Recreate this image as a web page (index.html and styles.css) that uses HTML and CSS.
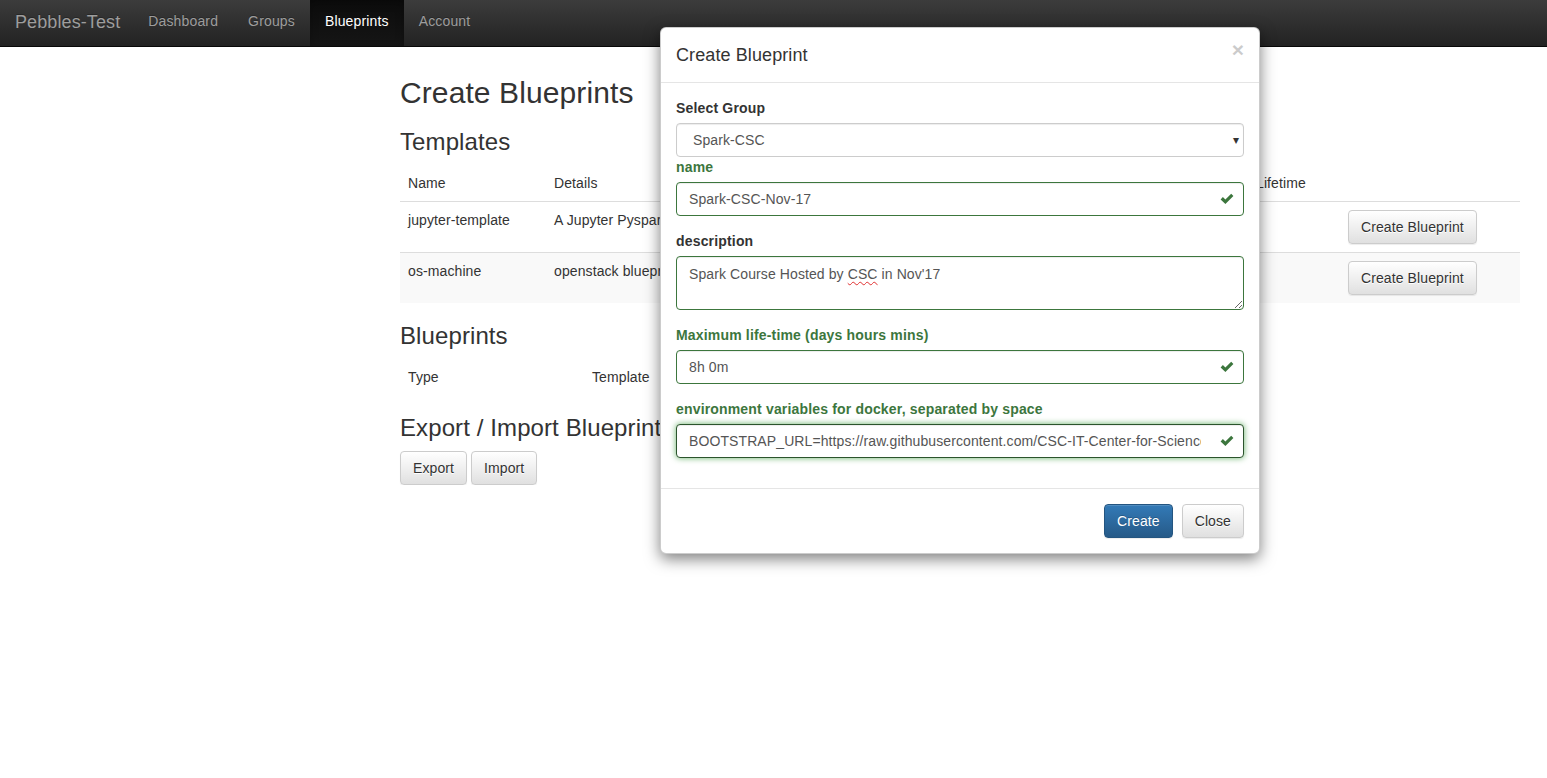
FILE: index.html
```html
<!DOCTYPE html>
<html lang="en">
<head>
<meta charset="utf-8">
<title>Pebbles-Test - Blueprints</title>
<link rel="stylesheet" href="styles.css">
</head>
<body>
<nav class="navbar">
  <a class="brand" href="#">Pebbles-Test</a>
  <ul class="nav">
    <li><a href="#">Dashboard</a></li>
    <li><a href="#">Groups</a></li>
    <li class="active"><a href="#">Blueprints</a></li>
    <li><a href="#">Account</a></li>
  </ul>
</nav>

<main class="main">
  <h2>Create Blueprints</h2>

  <h3>Templates</h3>
  <table class="table templates">
    <thead>
      <tr>
        <th class="c-name">Name</th>
        <th class="c-details">Details</th>
        <th class="c-life">Lifetime</th>
        <th class="c-act"></th>
      </tr>
    </thead>
    <tbody>
      <tr>
        <td>jupyter-template</td>
        <td>A Jupyter Pyspark notebook environment</td>
        <td></td>
        <td><button class="btn btn-default">Create Blueprint</button></td>
      </tr>
      <tr class="striped">
        <td>os-machine</td>
        <td>openstack blueprint for virtual machines</td>
        <td></td>
        <td><button class="btn btn-default">Create Blueprint</button></td>
      </tr>
    </tbody>
  </table>

  <h3>Blueprints</h3>
  <table class="table blueprints">
    <thead>
      <tr>
        <th class="c-type">Type</th>
        <th class="c-tpl">Template</th>
        <th>Name</th>
      </tr>
    </thead>
  </table>

  <h3 class="h3-export">Export / Import Blueprints</h3>
  <div class="btn-row">
    <button class="btn btn-default">Export</button>
    <button class="btn btn-default">Import</button>
  </div>
</main>

<div class="modal">
  <div class="modal-header">
    <h4 class="modal-title">Create Blueprint</h4>
    <button class="close" type="button">&times;</button>
  </div>
  <div class="modal-body">
    <div class="form-group tight">
      <label>Select Group</label>
      <div class="select-wrap">
        <select class="form-control select">
          <option>Spark-CSC</option>
        </select>
        <span class="caret">&#9662;</span>
      </div>
    </div>
    <div class="form-group success">
      <label>name</label>
      <div class="feedback-wrap">
        <input class="form-control" type="text" value="Spark-CSC-Nov-17">
        <svg class="ok" viewBox="0 0 14 14" width="14" height="14"><path d="M0.6 7.4 L2.9 5.1 L5.4 7.5 L11.2 1.8 L13.4 4.1 L5.4 12 Z" fill="#3c763d"/></svg>
      </div>
    </div>
    <div class="form-group">
      <label>description</label>
      <div class="form-control textarea">Spark Course Hosted by <span class="misspelled">CSC</span> in Nov'17</div>
    </div>
    <div class="form-group success">
      <label>Maximum life-time (days hours mins)</label>
      <div class="feedback-wrap">
        <input class="form-control" type="text" value="8h 0m">
        <svg class="ok" viewBox="0 0 14 14" width="14" height="14"><path d="M0.6 7.4 L2.9 5.1 L5.4 7.5 L11.2 1.8 L13.4 4.1 L5.4 12 Z" fill="#3c763d"/></svg>
      </div>
    </div>
    <div class="form-group success">
      <label>environment variables for docker, separated by space</label>
      <div class="feedback-wrap">
        <input class="form-control focused" type="text" value="BOOTSTRAP_URL=https://raw.githubusercontent.com/CSC-IT-Center-for-Science/pebbles-environments/master/spark/bootstrap.sh">
        <svg class="ok" viewBox="0 0 14 14" width="14" height="14"><path d="M0.6 7.4 L2.9 5.1 L5.4 7.5 L11.2 1.8 L13.4 4.1 L5.4 12 Z" fill="#3c763d"/></svg>
      </div>
    </div>
  </div>
  <div class="modal-footer">
    <button class="btn btn-primary">Create</button>
    <button class="btn btn-default">Close</button>
  </div>
</div>
</body>
</html>
```

FILE: styles.css
```css
* { box-sizing: border-box; }

html, body {
  margin: 0;
  padding: 0;
  background: #fff;
}

body {
  font-family: "Liberation Sans", Arial, Helvetica, sans-serif;
  font-size: 14px;
  line-height: 20px;
  color: #333;
  letter-spacing: 0.1px;
}

/* ---------- navbar ---------- */
.navbar {
  display: flex;
  align-items: stretch;
  height: 47px;
  background: linear-gradient(to bottom, #3c3c3c 0, #222 100%);
  border-bottom: 1px solid #080808;
}

.brand {
  display: flex;
  align-items: center;
  padding: 0 13px 2px 15px;
  font-size: 18px;
  color: #9d9d9d;
  text-decoration: none;
  text-shadow: 0 -1px 0 rgba(0, 0, 0, .25);
}

.nav {
  display: flex;
  margin: 0;
  padding: 0;
  list-style: none;
}

.nav li a {
  display: flex;
  align-items: center;
  height: 100%;
  padding: 0 15px 4px;
  color: #9d9d9d;
  text-decoration: none;
  letter-spacing: 0.15px;
  text-shadow: 0 -1px 0 rgba(0, 0, 0, .25);
}

.nav li.active a {
  color: #fff;
  background: linear-gradient(to bottom, #0c0c0c 0, #151515 100%);
  box-shadow: inset 0 3px 9px rgba(0, 0, 0, .25);
}

/* ---------- main ---------- */
.main {
  padding: 29px 27px 0 400px;
}

h2 {
  margin: 0 0 10px;
  font-size: 30px;
  font-weight: 500;
  line-height: 1.1;
}

h3 {
  margin: 20px 0 10px;
  font-size: 24px;
  font-weight: 500;
  line-height: 1.1;
}

.table {
  width: 100%;
  border-collapse: collapse;
  margin-bottom: 20px;
}

.table th {
  text-align: left;
  font-weight: normal;
  padding: 8px;
  vertical-align: bottom;
}

.templates th {
  border-bottom: 1px solid #ddd;
}

.blueprints {
  margin-bottom: 19px;
}

.blueprints th {
  padding: 7px 8px 8px;
}

.table td {
  padding: 8px;
  vertical-align: top;
  border-top: 1px solid #ddd;
  white-space: nowrap;
}

.table tr.striped td {
  background: #f9f9f9;
}

.c-name { width: 146px; }
.c-life { width: 92px; }
.c-act { width: 180px; }
.c-type { width: 184px; }
.c-tpl { width: 184px; }

/* ---------- buttons ---------- */
.btn {
  display: inline-block;
  margin: 0;
  padding: 6px 12px;
  font-family: inherit;
  font-size: 14px;
  line-height: 20px;
  letter-spacing: 0.1px;
  border: 1px solid transparent;
  border-radius: 4px;
  cursor: pointer;
  white-space: nowrap;
  box-shadow: inset 0 1px 0 rgba(255, 255, 255, .15), 0 1px 1px rgba(0, 0, 0, .075);
}

.btn-default {
  color: #333;
  background: linear-gradient(to bottom, #fff 0, #e0e0e0 100%);
  border-color: #ccc;
  text-shadow: 0 1px 0 #fff;
}

.btn-primary {
  color: #fff;
  background: linear-gradient(to bottom, #337ab7 0, #265a88 100%);
  border-color: #245580;
  text-shadow: 0 -1px 0 rgba(0, 0, 0, .2);
}

.btn-row {
  display: flex;
  gap: 4px;
}

/* ---------- modal ---------- */
.modal {
  position: absolute;
  top: 27px;
  left: 660px;
  width: 600px;
  background: #fff;
  border: 1px solid rgba(0, 0, 0, .2);
  border-radius: 6px;
  box-shadow: 0 5px 15px rgba(0, 0, 0, .5);
  z-index: 10;
}

.modal-header {
  display: flex;
  justify-content: space-between;
  align-items: flex-start;
  padding: 15px;
  border-bottom: 1px solid #e5e5e5;
}

.modal-title {
  margin: 0;
  font-size: 18px;
  font-weight: 500;
  line-height: 24px;
}

.close {
  margin: -4px 0 0;
  padding: 0;
  background: transparent;
  border: 0;
  font-family: inherit;
  font-size: 21px;
  font-weight: bold;
  line-height: 1;
  color: #000;
  opacity: .2;
  text-shadow: 0 1px 0 #fff;
  cursor: pointer;
}

.modal-body {
  padding: 15px;
}

.form-group {
  margin-bottom: 15px;
}

.form-group.tight {
  margin-bottom: 0;
}

.form-group label {
  display: block;
  margin-bottom: 5px;
  font-weight: bold;
  letter-spacing: 0.17px;
}

.form-group.success label {
  color: #3c763d;
}

.form-control {
  display: block;
  width: 100%;
  height: 34px;
  margin: 0;
  padding: 6px 12px;
  font-family: inherit;
  font-size: 14px;
  line-height: 20px;
  letter-spacing: 0.1px;
  color: #555;
  background: #fff;
  border: 1px solid #ccc;
  border-radius: 4px;
  box-shadow: inset 0 1px 1px rgba(0, 0, 0, .075);
  outline: none;
}

.success .form-control {
  border-color: #3c763d;
  padding-right: 42px;
}

.success .form-control.focused {
  border-color: #2b542c;
  box-shadow: inset 0 1px 1px rgba(0, 0, 0, .075), 0 0 6px #67b168;
}

.select-wrap,
.feedback-wrap {
  position: relative;
}

.select {
  -webkit-appearance: none;
  appearance: none;
  padding-left: 16px;
}

.caret {
  position: absolute;
  right: 5px;
  top: 7px;
  font-size: 12px;
  color: #333;
  pointer-events: none;
}

.ok {
  position: absolute;
  right: 10px;
  top: 10px;
  pointer-events: none;
}

.textarea {
  height: 54px;
  padding-top: 7px;
  resize: vertical;
  overflow: auto;
  border-color: #3c763d;
}

.misspelled {
  text-decoration: underline wavy #e03030;
  text-decoration-thickness: 1px;
  text-underline-offset: 2px;
}

.modal-footer {
  display: flex;
  justify-content: flex-end;
  gap: 9px;
  padding: 15px;
  border-top: 1px solid #e5e5e5;
}
```
